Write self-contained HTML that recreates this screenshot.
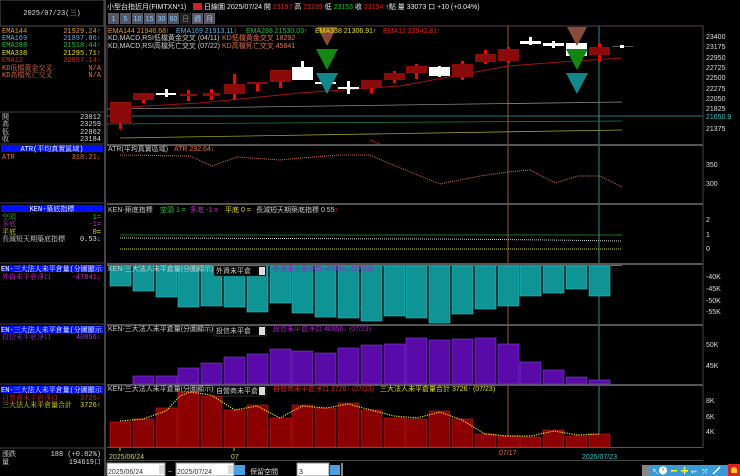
<!DOCTYPE html>
<html><head><meta charset="utf-8"><style>
html,body{margin:0;padding:0;background:#000;width:740px;height:476px;overflow:hidden}
svg{display:block}
text{font-family:"Liberation Sans","Noto Sans CJK TC",sans-serif;font-size:7px}
.l{font-family:"Liberation Mono","Noto Serif CJK SC",monospace;font-size:7px}
</style></head><body>
<svg width="740" height="476" viewBox="0 0 740 476" xmlns="http://www.w3.org/2000/svg">
<rect width="740" height="476" fill="#000"/>
<!-- left panel frame -->
<rect x="0" y="0" width="104" height="26" fill="#000" stroke="#555" stroke-width="1"/>
<text x="52" y="15" fill="#ddd" text-anchor="middle" class="l">2025/07/23(三)</text>
<rect x="104" y="0" width="2" height="476" fill="#444"/>
<line x1="0" y1="112" x2="104" y2="112" stroke="#444"/>
<!-- EMA rows -->
<g class="l">
<text x="2" y="33" fill="#e09a30" class="l">EMA144</text><text x="101" y="33" fill="#e09a30" text-anchor="end" class="l">21929.24↑</text>
<text x="2" y="40" fill="#5ab0e0" class="l">EMA169</text><text x="101" y="40" fill="#5ab0e0" text-anchor="end" class="l">21897.86↑</text>
<text x="2" y="47" fill="#20c040" class="l">EMA288</text><text x="101" y="47" fill="#20c040" text-anchor="end" class="l">21518.44↑</text>
<text x="2" y="55" fill="#e0e000" class="l">EMA338</text><text x="101" y="55" fill="#e0e000" text-anchor="end" class="l">21295.71↑</text>
<text x="2" y="62" fill="#e02020" class="l">EMA12</text><text x="101" y="62" fill="#e02020" text-anchor="end" class="l">22897.14↑</text>
<text x="2" y="70" fill="#e07050" class="l">KD低檔黃金交叉</text><text x="101" y="70" fill="#e07050" text-anchor="end" class="l">N/A</text>
<text x="2" y="77" fill="#e07050" class="l">KD高檔死亡交叉</text><text x="101" y="77" fill="#e07050" text-anchor="end" class="l">N/A</text>
<text x="2" y="119" fill="#ddd" class="l">開</text><text x="101" y="119" fill="#ddd" text-anchor="end" class="l">23012</text>
<text x="2" y="126" fill="#ddd" class="l">高</text><text x="101" y="126" fill="#ddd" text-anchor="end" class="l">23259</text>
<text x="2" y="134" fill="#ddd" class="l">低</text><text x="101" y="134" fill="#ddd" text-anchor="end" class="l">22862</text>
<text x="2" y="141" fill="#ddd" class="l">收</text><text x="101" y="141" fill="#ddd" text-anchor="end" class="l">23184</text>
</g>
<!-- ATR left -->
<line x1="0" y1="144" x2="104" y2="144" stroke="#444"/>
<rect x="1" y="145" width="102" height="7" fill="#0010ff"/>
<text x="52" y="151" fill="#fff" text-anchor="middle" class="l">ATR(平均真實區域)</text>
<text x="2" y="159" fill="#e07030" class="l">ATR</text><text x="101" y="159" fill="#e07030" text-anchor="end" class="l">318.21↓</text>
<line x1="0" y1="203" x2="104" y2="203" stroke="#444"/>
<rect x="1" y="205" width="102" height="7" fill="#0010ff"/>
<text x="52" y="211" fill="#fff" text-anchor="middle" class="l">KEN-築底指標</text>
<text x="2" y="219" fill="#20c020" class="l">空頭</text><text x="101" y="219" fill="#20c020" text-anchor="end" class="l">1=</text>
<text x="2" y="226" fill="#d020d0" class="l">多底</text><text x="101" y="226" fill="#d020d0" text-anchor="end" class="l">-1=</text>
<text x="2" y="234" fill="#e0e000" class="l">平底</text><text x="101" y="234" fill="#e0e000" text-anchor="end" class="l">0=</text>
<text x="2" y="241" fill="#ddd" class="l">長減短天期築底指標</text><text x="101" y="241" fill="#ddd" text-anchor="end" class="l">0.53↓</text>
<line x1="0" y1="263" x2="104" y2="263" stroke="#444"/>
<rect x="1" y="265" width="102" height="7" fill="#0010ff"/>
<text x="1" y="271" fill="#fff" class="l">EN-三大法人未平倉量(分圖顯示</text>
<text x="2" y="279" fill="#e020e0" class="l">外資未平倉淨口</text><text x="101" y="279" fill="#e020e0" text-anchor="end" class="l">-47841↓</text>
<line x1="0" y1="324" x2="104" y2="324" stroke="#444"/>
<rect x="1" y="326" width="102" height="7" fill="#0010ff"/>
<text x="1" y="332" fill="#fff" class="l">EN-三大法人未平倉量(分圖顯示</text>
<text x="2" y="339" fill="#9040e0" class="l">投信未平倉淨口</text><text x="101" y="339" fill="#9040e0" text-anchor="end" class="l">40856↓</text>
<line x1="0" y1="384" x2="104" y2="384" stroke="#444"/>
<rect x="1" y="386" width="102" height="7" fill="#0010ff"/>
<text x="1" y="392" fill="#fff" class="l">EN-三大法人未平倉量(分圖顯示</text>
<text x="2" y="400" fill="#e02020" class="l">自營商未平倉淨口</text><text x="101" y="400" fill="#e02020" text-anchor="end" class="l">3726↑</text>
<text x="2" y="407" fill="#e0e000" class="l">三大法人未平倉量合計</text><text x="101" y="407" fill="#e0e000" text-anchor="end" class="l">3726↑</text>
<line x1="0" y1="448" x2="104" y2="448" stroke="#444"/>
<text x="2" y="456" fill="#ddd" class="l">漲跌</text><text x="101" y="456" fill="#ddd" text-anchor="end" class="l">188 (+0.82%)</text>
<text x="2" y="464" fill="#ddd" class="l">量</text><text x="101" y="464" fill="#ddd" text-anchor="end" class="l">194619口</text>

<!-- header -->
<text x="107" y="9" fill="#eee" font-size="8">小型台指近月(FIMTXN*1)</text>
<rect x="193" y="3" width="9" height="7" fill="#d02020"/>
<text x="204" y="9" fill="#eee" font-size="8">日線圖  2025/07/24  開 <tspan fill="#e02020">23197</tspan>  高 <tspan fill="#e02020">23239</tspan>  低 <tspan fill="#20c020">23153</tspan>  收 <tspan fill="#e02020">23194</tspan> ↑點  量 33073 口  +10 (+0.04%)</text>
<g>
<rect x="108" y="13" width="11" height="11" fill="#556"/><text x="113.5" y="21" fill="#8cf" text-anchor="middle">1</text>
<rect x="120" y="13" width="11" height="11" fill="#556"/><text x="125.5" y="21" fill="#8cf" text-anchor="middle">5</text>
<rect x="132" y="13" width="11" height="11" fill="#556"/><text x="137.5" y="21" fill="#8cf" text-anchor="middle">10</text>
<rect x="144" y="13" width="11" height="11" fill="#556"/><text x="149.5" y="21" fill="#8cf" text-anchor="middle">15</text>
<rect x="156" y="13" width="11" height="11" fill="#556"/><text x="161.5" y="21" fill="#8cf" text-anchor="middle">30</text>
<rect x="168" y="13" width="11" height="11" fill="#556"/><text x="173.5" y="21" fill="#8cf" text-anchor="middle">60</text>
<rect x="180" y="13" width="11" height="11" fill="#222"/><text x="185.5" y="21" fill="#888" text-anchor="middle">日</text>
<rect x="192" y="13" width="11" height="11" fill="#556"/><text x="197.5" y="21" fill="#8cf" text-anchor="middle">週</text>
<rect x="204" y="13" width="11" height="11" fill="#556"/><text x="209.5" y="21" fill="#8cf" text-anchor="middle">月</text>
</g>

<!-- main panel frame -->
<rect x="107" y="26" width="596" height="119" fill="none" stroke="#5a3a48"/>
<!-- vertical markers -->
<line x1="508" y1="26" x2="508" y2="448" stroke="#c07040" stroke-width="0.8"/>
<line x1="599" y1="26" x2="599" y2="448" stroke="#40b0b0" stroke-width="0.8"/>
<!-- ema lines -->
<polyline points="110,108 200,103 300,93 400,86 508,66 560,62 622,58" fill="none" stroke="#a01010" stroke-width="1"/>
<line x1="107" y1="109" x2="622" y2="102" stroke="#888" stroke-width="0.8"/>
<line x1="107" y1="116" x2="703" y2="116" stroke="#30a0a0" stroke-width="0.8"/>
<line x1="107" y1="124" x2="622" y2="121" stroke="#208040" stroke-width="0.8"/>
<line x1="120" y1="138" x2="622" y2="130" stroke="#a0a020" stroke-width="0.8"/>
<line x1="370" y1="140" x2="380" y2="144" stroke="#a01010"/>
<!-- candles -->
<g stroke="none">
<rect x="119" y="102" width="3" height="27" fill="#f00"/><rect x="110" y="102" width="21" height="21" fill="#8b0a0a"/>
<rect x="142" y="93" width="3" height="10" fill="#f00"/><rect x="133" y="93" width="21" height="7" fill="#8b0a0a"/>
<rect x="165" y="89" width="3" height="8" fill="#fff"/><rect x="156" y="93" width="20" height="2" fill="#fff"/>
<rect x="187" y="90" width="3" height="11" fill="#f00"/><rect x="180" y="94" width="17" height="2" fill="#8b0a0a"/>
<rect x="210" y="89" width="3" height="11" fill="#f00"/><rect x="203" y="93" width="17" height="3" fill="#8b0a0a"/>
<rect x="233" y="74" width="3" height="26" fill="#f00"/><rect x="224" y="84" width="21" height="10" fill="#8b0a0a"/>
<rect x="256" y="82" width="3" height="9" fill="#f00"/><rect x="247" y="82" width="21" height="2" fill="#8b0a0a"/>
<rect x="279" y="70" width="3" height="18" fill="#f00"/><rect x="270" y="70" width="21" height="12" fill="#8b0a0a"/>
<rect x="301" y="61" width="3" height="19" fill="#fff"/><rect x="292" y="67" width="21" height="13" fill="#fff"/>
<rect x="315" y="82" width="21" height="2" fill="#fff"/>
<rect x="347" y="81" width="3" height="13" fill="#fff"/><rect x="338" y="87" width="21" height="2" fill="#fff"/>
<rect x="370" y="80" width="3" height="13" fill="#f00"/><rect x="361" y="80" width="21" height="8" fill="#8b0a0a"/>
<rect x="393" y="71" width="3" height="12" fill="#f00"/><rect x="384" y="73" width="21" height="7" fill="#8b0a0a"/>
<rect x="415" y="64" width="3" height="15" fill="#f00"/><rect x="406" y="66" width="21" height="7" fill="#8b0a0a"/>
<rect x="438" y="66" width="3" height="11" fill="#fff"/><rect x="429" y="67" width="21" height="9" fill="#fff"/>
<rect x="461" y="61" width="3" height="19" fill="#f00"/><rect x="452" y="64" width="21" height="13" fill="#8b0a0a"/>
<rect x="484" y="50" width="3" height="14" fill="#f00"/><rect x="475" y="54" width="21" height="8" fill="#8b0a0a"/>
<rect x="507" y="47" width="3" height="16" fill="#f00"/><rect x="498" y="49" width="21" height="12" fill="#8b0a0a"/>
<rect x="529" y="37" width="3" height="8" fill="#fff"/><rect x="520" y="41" width="21" height="3" fill="#fff"/>
<rect x="552" y="41" width="3" height="7" fill="#fff"/><rect x="543" y="43" width="21" height="3" fill="#fff"/>
<rect x="566" y="43" width="21" height="13" fill="#fff"/>
<rect x="598" y="43" width="3" height="19" fill="#f00"/><rect x="589" y="47" width="21" height="8" fill="#8b0a0a"/>
<line x1="612" y1="46.5" x2="633" y2="46.5" stroke="#aaa" stroke-width="0.6"/><rect x="620" y="45" width="4" height="3" fill="#fff"/>
</g>
<!-- triangles -->
<polygon points="317,27 337,27 327,46" fill="#8a4a38"/>
<polygon points="316,49 338,49 327,70" fill="#118811"/>
<polygon points="316,73 338,73 327,94" fill="#108888"/>
<polygon points="567,27 587,27 577,46" fill="#8a4a38"/>
<polygon points="566,49 588,49 577,70" fill="#118811"/>
<polygon points="566,73 588,73 577,94" fill="#108888"/>
<!-- legend -->
<text x="108" y="33" fill="#e09a30">EMA144 21946.68↑</text>
<text x="176" y="33" fill="#5ab0e0">EMA169 21913.11↑</text>
<text x="246" y="33" fill="#20c040">EMA288 21530.03↑</text>
<text x="315" y="33" fill="#e0e000">EMA338 21306.91↑</text>
<text x="383" y="33" fill="#e02020">EMA12 22942.81↑</text>
<text x="108" y="40" fill="#ccc">KD,MACD,RSI低檔黃金交叉  (04/11)</text>
<text x="222" y="40" fill="#e07050">KD低檔黃金交叉 18292</text>
<text x="108" y="48" fill="#ccc">KD,MACD,RSI高檔死亡交叉  (07/22)</text>
<text x="222" y="48" fill="#e07050">KD高檔死亡交叉 45841</text>
<!-- price axis -->
<g fill="#ddd">
<text x="706" y="39">23400</text><text x="706" y="49">23175</text><text x="706" y="60">22950</text>
<text x="706" y="70">22725</text><text x="706" y="80">22500</text><text x="706" y="91">22275</text>
<text x="706" y="101">22050</text><text x="706" y="111">21825</text><text x="706" y="131">21375</text>
</g>
<rect x="704" y="113" width="36" height="7" fill="#000"/>
<text x="706" y="119" fill="#30c0c0">21650.9</text>

<!-- separators -->
<rect x="107" y="144" width="596" height="2" fill="#555"/>
<rect x="107" y="203" width="596" height="2" fill="#555"/>
<rect x="107" y="263" width="596" height="2" fill="#555"/>
<rect x="107" y="324" width="596" height="2" fill="#555"/>
<rect x="107" y="384" width="596" height="2" fill="#555"/>
<rect x="107" y="447" width="596" height="1" fill="#555"/>
<line x1="703" y1="26" x2="703" y2="448" stroke="#444"/>

<!-- ATR -->
<text x="108" y="151" fill="#ccc">ATR(平均真實區域)</text>
<text x="174" y="151" fill="#e07030">ATR 292.64↓</text>
<polyline points="120,155 190,156 212,166 237,157 280,160 300,158 340,155 370,155 393,165 440,184 480,176 508,172 530,170 555,183 578,176 600,176 622,187" fill="none" stroke="#d07050" stroke-width="1" stroke-dasharray="1,1"/>
<text x="706" y="167" fill="#ddd">350</text><text x="706" y="186" fill="#ddd">300</text>

<!-- KEN -->
<text x="108" y="212" fill="#ccc">KEN-築底指標</text>
<text x="160" y="212" fill="#20c020">空頭 1 =</text>
<text x="190" y="212" fill="#d020d0">多底 -1 =</text>
<text x="225" y="212" fill="#e0e000">平底 0 =</text>
<text x="256" y="212" fill="#ccc">長減短天期築底指標 0.55<tspan fill="#e02020">↑</tspan></text>
<line x1="120" y1="235" x2="622" y2="235" stroke="#20a020" stroke-width="0.8"/>
<polyline points="120,238 440,239 550,240 622,241" fill="none" stroke="#ccc" stroke-width="1" stroke-dasharray="1,1"/>
<line x1="120" y1="249" x2="622" y2="249" stroke="#d0d020" stroke-width="1" stroke-dasharray="1,1"/>
<text x="706" y="222" fill="#ddd">2</text><text x="706" y="237" fill="#ddd">1</text><text x="706" y="251" fill="#ddd">0</text>

<!-- cyan bars -->
<g fill="#0e9494" stroke="#20c0c0" stroke-width="0.6">
<rect x="110" y="266" width="21" height="20"/><rect x="133" y="266" width="21" height="25"/>
<rect x="156" y="266" width="21" height="31"/><rect x="178" y="266" width="21" height="41"/>
<rect x="201" y="266" width="21" height="40"/><rect x="224" y="266" width="21" height="41"/>
<rect x="247" y="266" width="21" height="46"/><rect x="270" y="266" width="21" height="37"/>
<rect x="292" y="266" width="21" height="47"/><rect x="315" y="266" width="21" height="51"/>
<rect x="338" y="266" width="21" height="52"/><rect x="361" y="266" width="21" height="55"/>
<rect x="384" y="266" width="21" height="50"/><rect x="406" y="266" width="21" height="52"/>
<rect x="429" y="266" width="21" height="57"/><rect x="452" y="266" width="21" height="48"/>
<rect x="475" y="266" width="21" height="43"/><rect x="498" y="266" width="21" height="40"/>
<rect x="520" y="266" width="21" height="30"/><rect x="543" y="266" width="21" height="27"/>
<rect x="566" y="266" width="21" height="23"/><rect x="589" y="266" width="21" height="30"/>
</g>
<line x1="107" y1="265.5" x2="622" y2="265.5" stroke="#a040c0"/>
<text x="108" y="271" fill="#ccc">KEN-三大法人未平倉量(分圖顯示)</text>
<rect x="214" y="266" width="52" height="10" fill="#000" stroke="#555" stroke-width="0.5"/>
<text x="216" y="273" fill="#ccc">外資未平倉</text><rect x="259" y="267" width="6" height="8" fill="#ddd"/>
<text x="273" y="271" fill="#a020c0">外資未平倉淨口 -47841↓ (07/23)</text>
<g fill="#ddd"><text x="706" y="279">-40K</text><text x="706" y="291">-45K</text><text x="706" y="303">-50K</text><text x="706" y="314">-55K</text></g>

<!-- purple bars -->
<g fill="#5a0aa8" stroke="#8040d0" stroke-width="0.6">
<rect x="133" y="376" width="21" height="8"/><rect x="156" y="376" width="21" height="8"/>
<rect x="178" y="368" width="21" height="16"/><rect x="201" y="363" width="21" height="21"/>
<rect x="224" y="357" width="21" height="27"/><rect x="247" y="354" width="21" height="30"/>
<rect x="270" y="349" width="21" height="35"/><rect x="292" y="351" width="21" height="33"/>
<rect x="315" y="353" width="21" height="31"/><rect x="338" y="348" width="21" height="36"/>
<rect x="361" y="345" width="21" height="39"/><rect x="384" y="344" width="21" height="40"/>
<rect x="406" y="338" width="21" height="46"/><rect x="429" y="340" width="21" height="44"/>
<rect x="452" y="339" width="21" height="45"/><rect x="475" y="338" width="21" height="46"/>
<rect x="498" y="344" width="21" height="40"/><rect x="520" y="362" width="21" height="22"/>
<rect x="543" y="370" width="21" height="14"/><rect x="566" y="377" width="21" height="7"/>
<rect x="589" y="380" width="21" height="4"/>
</g>
<text x="108" y="331" fill="#ccc">KEN-三大法人未平倉量(分圖顯示)</text>
<rect x="214" y="326" width="52" height="10" fill="#000" stroke="#555" stroke-width="0.5"/>
<text x="216" y="333" fill="#ccc">投信未平倉</text><rect x="259" y="327" width="6" height="8" fill="#ddd"/>
<text x="273" y="331" fill="#a020c0">投信未平倉淨口 40856↓ (07/23)</text>
<g fill="#ddd"><text x="706" y="347">50K</text><text x="706" y="368">45K</text></g>

<!-- red bars -->
<g fill="#8b0000" stroke="#c02020" stroke-width="0.6">
<rect x="110" y="422" width="21" height="25"/><rect x="133" y="419" width="21" height="28"/>
<rect x="156" y="408" width="21" height="39"/><rect x="178" y="392" width="21" height="55"/>
<rect x="201" y="396" width="21" height="51"/><rect x="224" y="410" width="21" height="37"/>
<rect x="247" y="405" width="21" height="42"/><rect x="270" y="418" width="21" height="29"/>
<rect x="292" y="405" width="21" height="42"/><rect x="315" y="408" width="21" height="39"/>
<rect x="338" y="403" width="21" height="44"/><rect x="361" y="410" width="21" height="37"/>
<rect x="384" y="418" width="21" height="29"/><rect x="406" y="419" width="21" height="28"/>
<rect x="429" y="411" width="21" height="36"/><rect x="452" y="419" width="21" height="28"/>
<rect x="475" y="434" width="21" height="13"/><rect x="498" y="436" width="21" height="11"/>
<rect x="520" y="437" width="21" height="10"/><rect x="543" y="430" width="21" height="17"/>
<rect x="566" y="436" width="21" height="11"/><rect x="589" y="434" width="21" height="13"/>
</g>
<polyline points="120,421 143,419 166,411 180,396 190,392 211,395 235,410 257,406 280,418 302,406 326,408 348,404 371,410 394,416 417,418 440,412 462,420 485,434 508,436 531,436 554,431 577,435 600,434" fill="none" stroke="#e8e020" stroke-width="1.2" stroke-dasharray="1.2,1.2"/>
<text x="108" y="391" fill="#ccc">KEN-三大法人未平倉量(分圖顯示)</text>
<rect x="214" y="386" width="52" height="10" fill="#000" stroke="#555" stroke-width="0.5"/>
<text x="216" y="393" fill="#ccc">自營商未平倉</text><rect x="259" y="387" width="6" height="8" fill="#ddd"/>
<text x="273" y="391" fill="#e02020">自營商未平倉淨口 3726↑ (07/23)</text>
<text x="380" y="391" fill="#e0e000">三大法人未平倉量合計 3726<tspan fill="#e02020">↑</tspan> (07/23)</text>
<g fill="#ddd"><text x="706" y="403">8K</text><text x="706" y="419">6K</text><text x="706" y="434">4K</text></g>

<!-- date axis -->
<line x1="120" y1="448" x2="120" y2="451" stroke="#cc0"/><line x1="234" y1="448" x2="234" y2="451" stroke="#cc0"/>
<text x="109" y="459" fill="#d0d060">2025/06/24</text>
<text x="231" y="459" fill="#d0d060">07</text>
<text x="499" y="455" fill="#e07040">07/17</text>
<text x="582" y="459" fill="#30c0c0">2025/07/23</text>
<line x1="107" y1="460.5" x2="703" y2="460.5" stroke="#444"/>

<!-- bottom controls -->
<rect x="107" y="463" width="58" height="13" fill="#fff" stroke="#888"/>
<text x="108" y="474" fill="#333" font-size="9">2025/06/24</text><rect x="159" y="465" width="5" height="9" fill="#ddd"/>
<text x="168" y="474" fill="#ddd" font-size="8">~</text>
<rect x="176" y="463" width="58" height="13" fill="#fff" stroke="#888"/>
<text x="177" y="474" fill="#333" font-size="9">2025/07/24</text><rect x="228" y="465" width="5" height="9" fill="#ddd"/>
<rect x="234" y="465" width="11" height="10" fill="#4aa0e0"/>
<text x="250" y="474" fill="#ddd" font-size="11">保留空間</text>
<rect x="297" y="463" width="32" height="13" fill="#fff" stroke="#888"/>
<text x="299" y="474" fill="#222" font-size="9">3</text>
<rect x="330" y="465" width="10" height="10" fill="#4aa0e0"/>
<rect x="341" y="463" width="2" height="13" fill="#888"/>
<!-- right toolbar -->
<rect x="642" y="465" width="8" height="11" fill="#888"/>
<rect x="650" y="465" width="78" height="11" fill="#3a9ad8"/>
<text x="652" y="474" fill="#fff" font-size="9">↖</text>
<circle cx="663" cy="470.5" r="4" fill="#fff"/><line x1="663" y1="470.5" x2="663" y2="468" stroke="#e04020"/>
<rect x="671" y="470" width="6" height="1.5" fill="#ff0"/>
<rect x="681" y="470" width="7" height="1.5" fill="#ff0"/><rect x="683.8" y="467" width="1.5" height="7" fill="#ff0"/>
<text x="691" y="474" fill="#fff" font-size="8">↩</text>
<text x="702" y="474" fill="#fff" font-size="8">⤧</text>
<line x1="713" y1="474" x2="720" y2="467" stroke="#fff" stroke-width="1.5"/>
<rect x="728" y="464" width="12" height="12" fill="#e02020"/>
<path d="M731,473 L731,469 Q734,465 737,469 L737,473 Z" fill="#ffd000"/>
</svg>
</body></html>
